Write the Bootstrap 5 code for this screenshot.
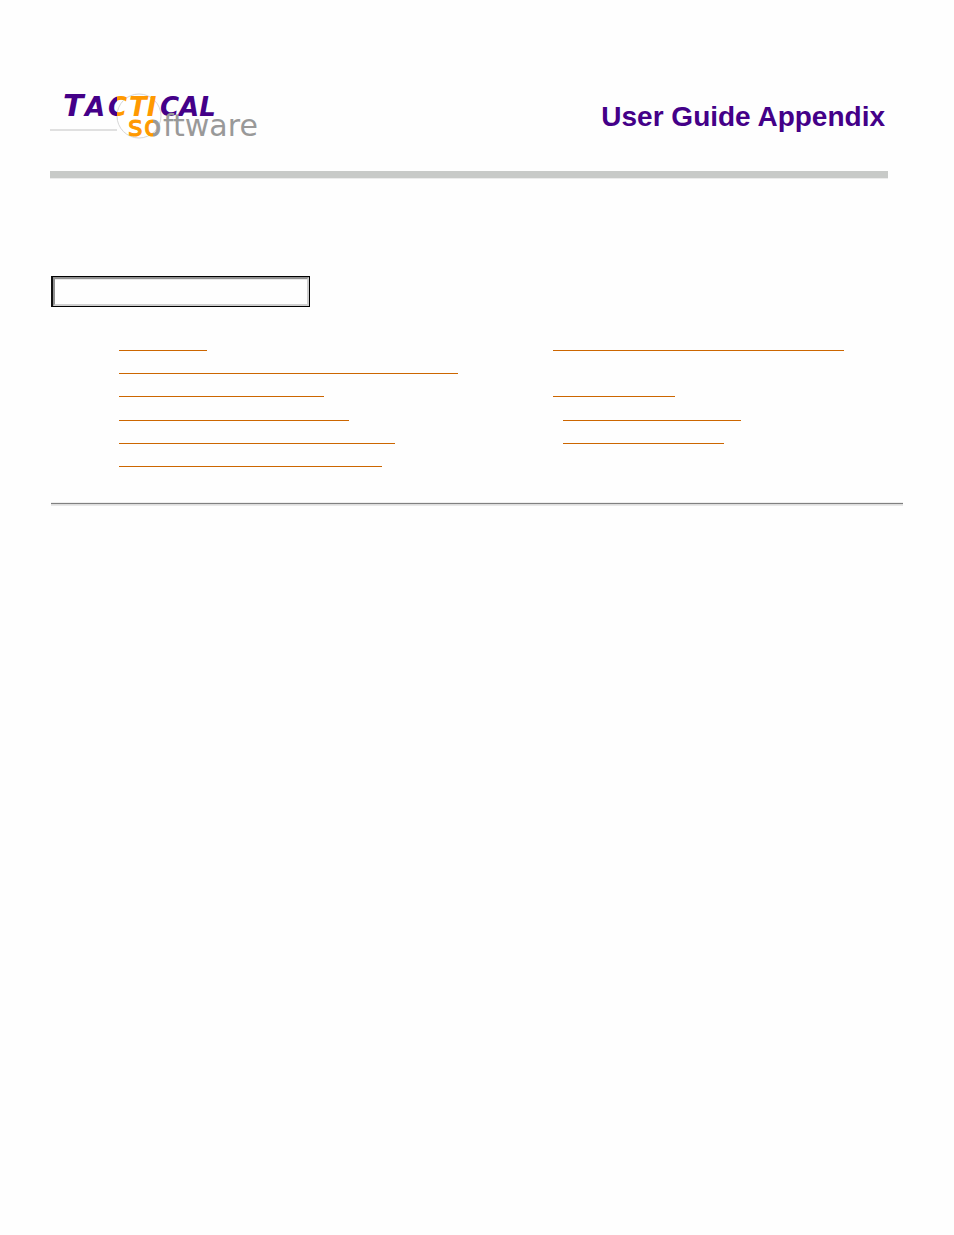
<!DOCTYPE html>
<html lang="en">
<head>
<meta charset="utf-8">
<meta name="viewport" content="width=device-width, initial-scale=1">
<title>User Guide Appendix</title>
<link href="https://cdn.jsdelivr.net/npm/bootstrap@5.3.0/dist/css/bootstrap.min.css" rel="stylesheet">
<style>
  body { font-family: "Liberation Sans", Arial, sans-serif; background: #fefefe; }
  .page { padding: 60px 51px 0; }
  .masthead { margin: 0 15px 0 -1px; height: 118px; border-bottom: 7px solid #c8cac8; box-shadow: 0 1px 0 #ececec; }
  .logo { width: 217px; height: 104px; }
  .guide-title { font-size: 28px; line-height: 32px; font-weight: 700; color: #440088; margin: 41px 3px 0 0; }
  .section-box { width: 259px; height: 31px; margin-top: 98px; border: 1px solid #000; border-left: 2px solid #111; }
  .section-inner { height: 29px; border: 2px solid; border-color: #909090 #cfcfcf #cfcfcf #909090; box-shadow: inset 0 1px 0 #e8e8e8; }
  .toc { display: grid; grid-template-columns: 31fr 25fr; grid-template-rows: 23px 23px 23px 24px 23px 23px; align-items: end; margin: 21px 0 0 68px; }
  .toc a { display: block; height: 20px; max-width: 100%; border-bottom: 1px solid #cc6600; }
  .second { grid-column: 2; }
  .sub-entry { margin-left: 10px; }
  .row-1 { grid-row: 1; } .row-2 { grid-row: 2; } .row-3 { grid-row: 3; }
  .row-4 { grid-row: 4; } .row-5 { grid-row: 5; } .row-6 { grid-row: 6; }
  .len-88 { width: 88px; } .len-122 { width: 122px; } .len-161 { width: 161px; }
  .len-178 { width: 178px; } .len-205 { width: 205px; } .len-230 { width: 230px; }
  .len-263 { width: 263px; } .len-276 { width: 276px; } .len-291 { width: 291px; } .len-339 { width: 339px; }
  .rule { height: 4px; margin: 35px 0 0; border: 0; opacity: 1; background: linear-gradient(#eee 0 1px, #808080 1px 2px, #dedede 2px 3px, #e8e8e8 3px); }
</style>
</head>
<body>
<div class="page">
  <header class="masthead d-flex justify-content-between align-items-start">
    <svg class="logo" viewBox="0 0 217 104" role="img" aria-label="Tactical Software">
      <defs>
        <linearGradient id="capC" gradientUnits="userSpaceOnUse" x1="0" x2="217"><stop offset=".31" stop-color="#440088"/><stop offset=".31" stop-color="#ff9900"/></linearGradient>
        <linearGradient id="lowO" gradientUnits="userSpaceOnUse" x1="0" x2="217"><stop offset=".475" stop-color="#ff9900"/><stop offset=".475" stop-color="#999"/></linearGradient>
      </defs>
      <path d="M0 70H67" stroke="#e0e0e0" stroke-width="2"/>
      <circle cx="89" cy="56" r="22" fill="#fff" stroke="#d6d6d6"/>
      <g font-family="DejaVu Sans, sans-serif" font-weight="700" font-style="italic" fill="#440088">
        <text x="13" y="56" font-size="30">T</text>
        <text x="35" y="56" font-size="26">A</text>
        <text x="58" y="56" font-size="26" fill="url(#capC)">C</text>
        <text x="79" y="56" font-size="26" fill="#ff9900">TI</text>
        <text x="110" y="56" font-size="26">CAL</text>
      </g>
      <g font-family="DejaVu Sans, sans-serif" font-size="28">
        <text x="78" y="76" fill="#ff9900" stroke="#ff9900">s</text>
        <text x="94" y="76" fill="url(#lowO)" stroke="url(#lowO)">o</text>
        <text x="113" y="76" font-size="30" fill="#999">ftware</text>
      </g>
    </svg>
    <h1 class="guide-title">User Guide Appendix</h1>
  </header>
  <main>
    <div class="section-box"><div class="section-inner"></div></div>
    <nav class="toc" aria-label="Appendix contents">
      <a href="#a1" class="row-1 len-88" aria-label="Section 1"></a>
      <a href="#a2" class="row-2 len-339" aria-label="Section 2"></a>
      <a href="#a3" class="row-3 len-205" aria-label="Section 3"></a>
      <a href="#a4" class="row-4 len-230" aria-label="Section 4"></a>
      <a href="#a5" class="row-5 len-276" aria-label="Section 5"></a>
      <a href="#a6" class="row-6 len-263" aria-label="Section 6"></a>
      <a href="#b1" class="second row-1 len-291" aria-label="Section 7"></a>
      <a href="#b2" class="second row-3 len-122" aria-label="Section 8"></a>
      <a href="#b3" class="second sub-entry row-4 len-178" aria-label="Section 8.1"></a>
      <a href="#b4" class="second sub-entry row-5 len-161" aria-label="Section 8.2"></a>
    </nav>
    <hr class="rule">
  </main>
</div>
<script src="https://cdn.jsdelivr.net/npm/bootstrap@5.3.0/dist/js/bootstrap.bundle.min.js"></script>
</body>
</html>
